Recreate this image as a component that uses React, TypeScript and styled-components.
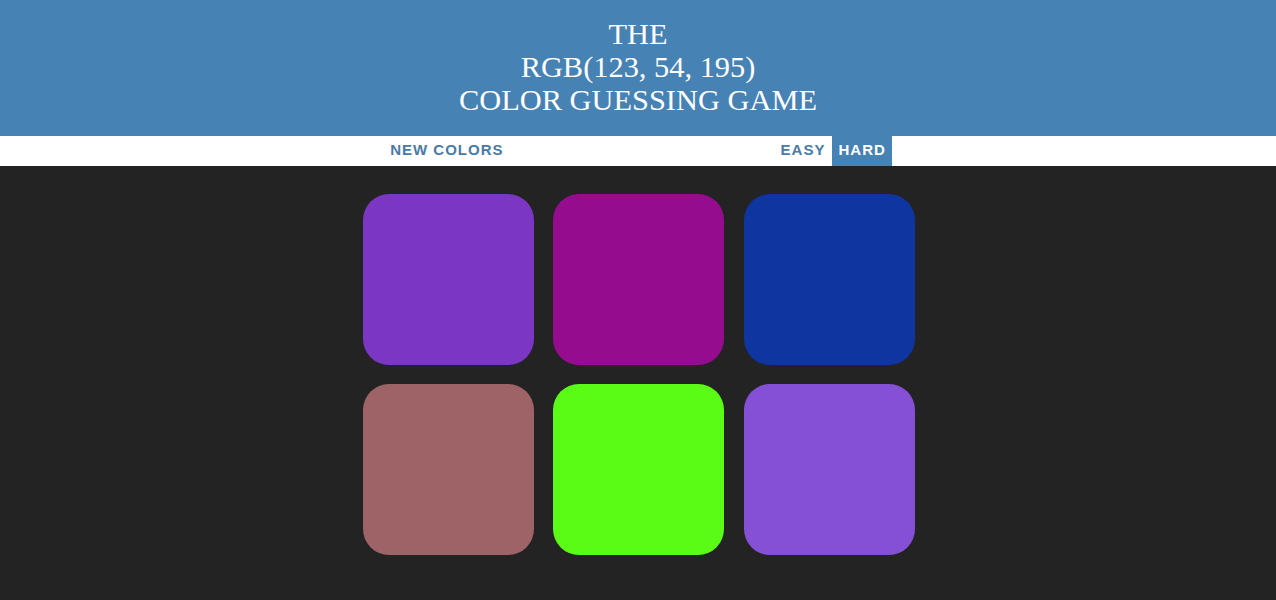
import React from "react";
import styled, { createGlobalStyle } from "styled-components";

const GlobalStyle = createGlobalStyle`
  html, body {
    margin: 0;
    padding: 0;
    background: #232323;
    font-family: "Liberation Sans", Arial, sans-serif;
    font-size: 16px;
  }
`;

const Header = styled.h1`
  margin: 0;
  padding: 18px 0 19px;
  background: #4682b4;
  color: #ffffff;
  text-align: center;
  text-transform: uppercase;
  font-family: "Liberation Serif", "Times New Roman", serif;
  font-weight: normal;
  font-size: 30.4px;
  line-height: 33px;
`;

const Line = styled.span`
  display: block;
`;

const Stripe = styled.div`
  background: #ffffff;
  height: 30px;
  text-align: center;
  white-space: nowrap;
  font-size: 16px;
`;

const StripeButton = styled.button<{ $selected?: boolean }>`
  border: none;
  height: 100%;
  padding: 0 6.5px 3px;
  margin: 0;
  font-family: "Liberation Sans", Arial, sans-serif;
  font-size: 15px;
  font-weight: 700;
  letter-spacing: 1px;
  text-transform: uppercase;
  vertical-align: top;
  background: ${(p) => (p.$selected ? "#4682b4" : "#ffffff")};
  color: ${(p) => (p.$selected ? "#ffffff" : "#4a7aa6")};
  outline: none;
  cursor: pointer;
`;

const Message = styled.span`
  display: inline-block;
  width: 20%;
`;

const Container = styled.div`
  width: 570px;
  margin: 18px auto 0;
  display: grid;
  grid-template-columns: repeat(3, 171px);
  column-gap: 19.5px;
  row-gap: 19px;
  justify-content: center;
  padding: 10px 0 10px 1.5px;
  box-sizing: border-box;
`;

const Square = styled.div<{ $color: string }>`
  width: 171px;
  height: 171px;
  border-radius: 26px;
  background: ${(p) => p.$color};
`;

const colors = [
  "rgb(123, 54, 195)",
  "#950c8f",
  "#0e35a0",
  "#9d6367",
  "#5afc16",
  "#8550d6",
];

export default function App() {
  return (
    <>
      <GlobalStyle />
      <Header>
        <Line>The</Line>
        <Line>RGB(123, 54, 195)</Line>
        <Line>Color Guessing Game</Line>
      </Header>
      <Stripe>
        <StripeButton>New Colors</StripeButton> <Message></Message>{" "}
        <StripeButton>Easy</StripeButton>
        <StripeButton $selected>Hard</StripeButton>
      </Stripe>
      <Container>
        {colors.map((c, i) => (
          <Square key={i} $color={c} />
        ))}
      </Container>
    </>
  );
}
